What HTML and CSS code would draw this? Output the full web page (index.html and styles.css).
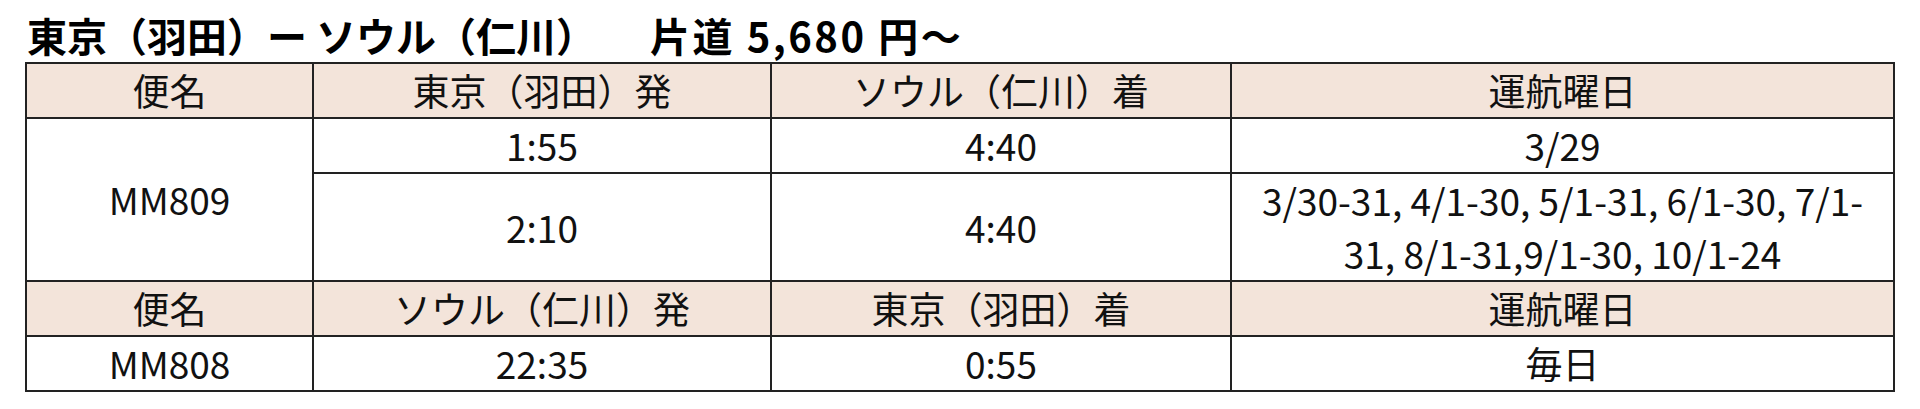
FILE: index.html
```html
<!DOCTYPE html>
<html lang="ja">
<head>
<meta charset="utf-8">
<link rel="stylesheet" href="styles.css">
</head>
<body>
<div class="wrap">
  <h2 class="title">東京（羽田）ー ソウル（仁川）　<span class="price">片道 5,680 円～</span></h2>
  <table class="tt">
    <colgroup>
      <col class="c1"><col class="c2"><col class="c3"><col class="c4">
    </colgroup>
    <tr class="head">
      <td>便名</td><td>東京（羽田）発</td><td>ソウル（仁川）着</td><td>運航曜日</td>
    </tr>
    <tr>
      <td rowspan="2">MM809</td><td>1:55</td><td>4:40</td><td>3/29</td>
    </tr>
    <tr>
      <td>2:10</td><td>4:40</td><td>3/30-31, 4/1-30, 5/1-31, 6/1-30, 7/1-<br>31, 8/1-31,9/1-30, 10/1-24</td>
    </tr>
    <tr class="head">
      <td>便名</td><td>ソウル（仁川）発</td><td>東京（羽田）着</td><td>運航曜日</td>
    </tr>
    <tr>
      <td>MM808</td><td>22:35</td><td>0:55</td><td>毎日</td>
    </tr>
  </table>
</div>
</body>
</html>
```
FILE: styles.css
```css
html, body {
  margin: 0;
  padding: 0;
  background: #fff;
}
body {
  font-family: "Noto Sans CJK JP", "Noto Sans", sans-serif;
  color: #111;
}
.wrap {
  padding: 11px 0 0 25px;
  width: 1868px;
}
.title {
  margin: 0 0 3px 2px;
  font-size: 40px;
  line-height: 48px;
  font-weight: 700;
  color: #000;
}
.price {
  margin-left: 34px;
  letter-spacing: 2.5px;
}
.tt {
  width: 1868px;
  border-collapse: collapse;
  table-layout: fixed;
  font-size: 37px;
  line-height: 53px;
}
.c1 { width: 287px; }
.c2 { width: 458px; }
.c3 { width: 460px; }
.c4 { width: 663px; }
.tt td {
  border: 2px solid #222;
  padding: 0;
  text-align: center;
  vertical-align: middle;
}
.head td {
  background: #f3e4da;
}
```
